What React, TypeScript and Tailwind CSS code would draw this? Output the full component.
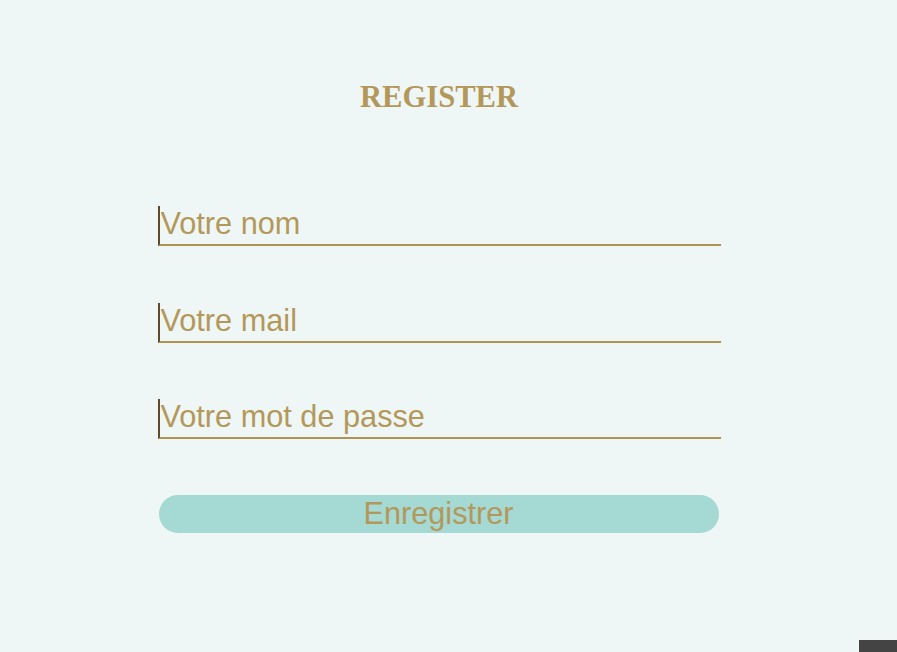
import React from 'react'

const fields = [
    { type: "text", placeholder: "Votre nom" },
    { type: "email", placeholder: "Votre mail" },
    { type: "password", placeholder: "Votre mot de passe" },
]

const App = () => {
    return (
        <div className="relative w-[897px] h-[652px] bg-[#eef7f5] overflow-hidden font-['Liberation_Sans',Arial,sans-serif]">
            <div className="w-[878px] flex flex-col items-center pt-[79px]">
                <h1 className="font-['Liberation_Serif','Times_New_Roman',serif] font-bold text-[30.6px] leading-[36px] text-[#b4985a]">
                    REGISTER
                </h1>

                <form className="mt-[91px] w-[563px] flex flex-col gap-[57px]" onSubmit={e => e.preventDefault()}>
                    {fields.map((f, i) => (
                        <input
                            key={f.placeholder}
                            type={f.type}
                            placeholder={f.placeholder}
                            className={`h-[40px] w-full bg-transparent border-l-2 border-b-2 border-l-[#5e4b2b] border-b-[#ad9452] px-[1px] pt-0 pb-[2px] text-[30.7px] text-[#b4985a] placeholder:text-[#b4985a] outline-none ${i === 2 ? "-mt-[1px]" : ""}`}
                        />
                    ))}

                    <button
                        type="submit"
                        className="-mt-[1px] ml-[1px] w-[560px] h-[38px] rounded-full bg-[#a5d9d4] text-[30.7px] leading-[38px] text-[#b4985a]"
                    >
                        Enregistrer
                    </button>
                </form>
            </div>

            <div className="absolute right-0 bottom-0 w-[38px] h-[12px] bg-[#444444]" />
        </div>
    )
}

export default App
